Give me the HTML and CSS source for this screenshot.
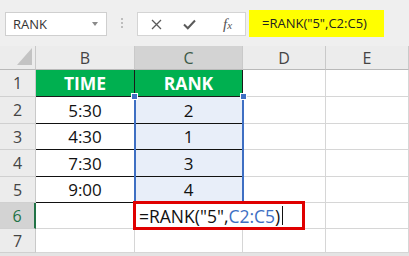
FILE: index.html
```html
<!DOCTYPE html>
<html>
<head>
<meta charset="utf-8">
<link rel="stylesheet" href="styles.css">
</head>
<body>
<div class="toolbar">
  <div class="namebox"><span>RANK</span><span class="caret"></span></div>
  <div class="grip"><i></i><i></i><i></i></div>
  <div class="fbox">
    <svg class="ic-x" width="11" height="11" viewBox="0 0 11 11"><path d="M1 1L10 10M10 1L1 10" stroke="#5a5a5a" stroke-width="1.3" fill="none"/></svg>
    <svg class="ic-ok" width="13" height="11" viewBox="0 0 13 11"><path d="M1 5.5L4.8 9.3L12 1.5" stroke="#5a5a5a" stroke-width="2" fill="none"/></svg>
    <span class="fx">f<span class="fx-x">x</span></span>
  </div>
  <div class="formula">=RANK("5",C2:C5)</div>
</div>
<div class="sheet">
  <div class="corner"><div class="tri"></div></div>
  <div class="ch">B</div>
  <div class="ch ch-sel">C</div>
  <div class="ch">D</div>
  <div class="ch">E</div>

  <div class="rh">1</div>
  <div class="cell head">TIME</div>
  <div class="cell head">RANK</div>
  <div class="cell"></div>
  <div class="cell"></div>

  <div class="rh">2</div>
  <div class="cell data">5:30</div>
  <div class="cell data rng">2</div>
  <div class="cell"></div>
  <div class="cell"></div>

  <div class="rh">3</div>
  <div class="cell data">4:30</div>
  <div class="cell data rng">1</div>
  <div class="cell"></div>
  <div class="cell"></div>

  <div class="rh">4</div>
  <div class="cell data">7:30</div>
  <div class="cell data rng">3</div>
  <div class="cell"></div>
  <div class="cell"></div>

  <div class="rh">5</div>
  <div class="cell data">9:00</div>
  <div class="cell data rng">4</div>
  <div class="cell"></div>
  <div class="cell"></div>

  <div class="rh rh-sel">6</div>
  <div class="cell"></div>
  <div class="cell"></div>
  <div class="cell"></div>
  <div class="cell"></div>

  <div class="rh">7</div>
  <div class="cell"></div>
  <div class="cell"></div>
  <div class="cell"></div>
  <div class="cell"></div>

  <div class="range"><span class="hd hd-l"></span><span class="hd hd-r"></span></div>
  <div class="edit">=RANK("5",<span class="ref">C2:C5</span>)<span class="cursor"></span></div>
</div>
</body>
</html>
```
FILE: styles.css
```css
html, body {
  margin: 0;
  padding: 0;
}
body {
  width: 409px;
  height: 256px;
  overflow: hidden;
  background: #e4e4e4;
  font-family: "Open Sans", "Liberation Sans", sans-serif;
}
.toolbar {
  height: 46px;
  box-sizing: border-box;
  background: #efefef;
  display: flex;
  align-items: flex-start;
  padding: 12px 0 0 5px;
}
.namebox {
  width: 102px;
  height: 24px;
  box-sizing: border-box;
  border: 1px solid #cfcfcf;
  background: #fff;
  display: flex;
  align-items: center;
  justify-content: space-between;
  padding: 0 8px 0 7px;
  font-size: 13px;
  color: #333;
}
.caret {
  width: 0;
  height: 0;
  border-left: 3.5px solid transparent;
  border-right: 3.5px solid transparent;
  border-top: 4px solid #8a8a8a;
}
.grip {
  margin: 6px 0 0 14px;
  display: flex;
  flex-direction: column;
  gap: 2px;
}
.grip i {
  display: block;
  width: 2px;
  height: 2px;
  background: #bdbdbd;
}
.fbox {
  margin-left: 14px;
  width: 109px;
  height: 24px;
  box-sizing: border-box;
  border: 1px solid #d4d4d4;
  background: #fff;
  display: flex;
  align-items: center;
}
.ic-x { margin-left: 13px; }
.ic-ok { margin-left: 21px; }
.fx {
  margin-left: 27px;
  font-family: "Liberation Serif", serif;
  font-style: italic;
  font-size: 15px;
  color: #555;
  line-height: 1;
}
.fx-x { font-size: 11px; }
.formula {
  margin: -2px 0 0 3px;
  width: 135px;
  height: 27px;
  box-sizing: border-box;
  background: #ffff00;
  padding-left: 13px;
  font-size: 13px;
  line-height: 27px;
  color: #222;
}
.sheet {
  position: relative;
  display: grid;
  grid-template-columns: 36px 99px 108px 83px 83px;
  grid-template-rows: 24px 27px 27px 26px 27px 26px 26px 24px;
  background: #fff;
}
.corner, .ch, .rh {
  background: #ececec;
  box-sizing: border-box;
  border-right: 1px solid #c9c9c9;
  border-bottom: 1px solid #b9b9b9;
}
.corner {
  display: flex;
  justify-content: flex-end;
  align-items: flex-end;
  padding: 0 3px 4px 0;
}
.tri {
  width: 15px;
  height: 17px;
  background: #c3c3c3;
  clip-path: polygon(100% 0, 100% 100%, 0 100%);
}
.ch {
  display: flex;
  align-items: center;
  justify-content: center;
  font-size: 16px;
  color: #444;
}
.ch-sel {
  background: #d3d3d3;
  color: #3b5a47;
}
.rh {
  display: flex;
  align-items: center;
  justify-content: center;
  font-size: 16px;
  color: #444;
  border-bottom-color: #d0d0d0;
}
.rh-sel {
  background: #d3d3d3;
  color: #217346;
  border-right: 2px solid #217346;
}
.cell {
  box-sizing: border-box;
  border-right: 1px solid #d6d6d6;
  border-bottom: 1px solid #d6d6d6;
  display: flex;
  align-items: center;
  justify-content: center;
  font-size: 17px;
  color: #111;
}
.head {
  background: #00b050;
  color: #fff;
  font-weight: 700;
  font-size: 17.5px;
  border-right-color: #1a1a1a;
  border-bottom-color: #1a1a1a;
}
.data {
  border-bottom-color: #111;
}
.rng {
  background: #e8eef9;
}
.range {
  position: absolute;
  left: 134px;
  top: 51px;
  width: 110px;
  height: 106px;
  box-sizing: border-box;
  border-left: 2px solid #3e6fc3;
  border-right: 2px solid #3e6fc3;
}
.hd {
  position: absolute;
  top: -4px;
  width: 5px;
  height: 5px;
  background: #3e6fc3;
  border: 1px solid #fff;
}
.hd-l { left: -5px; }
.hd-r { right: -5px; }
.edit {
  position: absolute;
  left: 133px;
  top: 155px;
  width: 172px;
  height: 29px;
  box-sizing: border-box;
  border: 3px solid #e00000;
  background: #fff;
  display: flex;
  align-items: center;
  padding-left: 3px;
  font-size: 17.5px;
  color: #111;
  white-space: nowrap;
}
.ref { color: #3e6fc3; }
.cursor {
  display: inline-block;
  width: 1px;
  height: 19px;
  background: #111;
  margin-left: 2px;
}
```
